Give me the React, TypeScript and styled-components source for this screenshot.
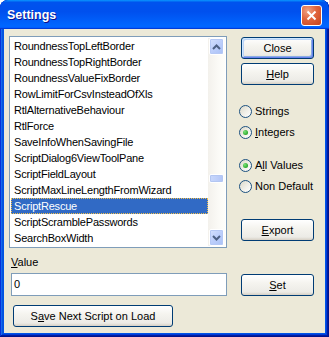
import React from "react";
import styled, { createGlobalStyle } from "styled-components";

const Global = createGlobalStyle`
  html, body { margin: 0; padding: 0; background: #ffffff; }
  body { font-family: "Liberation Sans", Arial, sans-serif; font-size: 11px; font-weight: 400; color: #000; }
  * { box-sizing: border-box; }
`;

const Window = styled.div`
  width: 329px;
  height: 337px;
  display: flex;
  flex-direction: column;
  border-radius: 8px 8px 0 0;
  overflow: hidden;
  background: #0055e5;
  box-shadow: inset -1px -1px #00138c, inset 1px 1px #0831d9, inset -2px -2px #001ea0,
    inset 2px 2px #166aee, inset -3px -3px #003bda, inset 3px 3px #0855dd;
`;

const TitleBar = styled.div`
  height: 29px;
  flex: none;
  display: flex;
  align-items: center;
  justify-content: space-between;
  padding: 0 7px 0 7px;
  background: linear-gradient(180deg, #0997ff, #0053ee 8%, #0050ee 40%, #0066ff 88%, #0066ff 93%, #005bff 95%, #003dd7 96%, #003dd7);
  border-radius: 8px 8px 0 0;
`;

const Title = styled.span`
  font-family: "Liberation Sans", Arial, sans-serif;
  font-weight: bold;
  font-size: 12.5px;
  color: #ffffff;
  text-shadow: 1px 1px #0f1089;
  margin-top: 1px;
`;

const CloseBox = styled.div`
  width: 21px;
  height: 21px;
  margin-top: 1px;
  border: 1px solid #ffffff;
  border-radius: 3px;
  background: radial-gradient(circle at 30% 25%, #f0a284 0%, #e0643d 45%, #c8421b 100%);
  display: flex;
  align-items: center;
  justify-content: center;
`;

const Client = styled.div`
  flex: 1;
  margin: 0 4px 4px 4px;
  background: #ece9d8;
  display: flex;
  flex-direction: column;
  padding: 7px 0 0 5px;
`;

const TopSection = styled.div`
  display: flex;
  height: 212px;
  gap: 14px;
`;

const ListBox = styled.div`
  width: 218px;
  height: 212px;
  border: 1px solid #7f9db9;
  background: #ffffff;
  padding: 1px;
  display: flex;
`;

const Items = styled.div`
  flex: 1;
  display: flex;
  flex-direction: column;
`;

const Item = styled.div<{ $selected?: boolean }>`
  height: 16px;
  line-height: 14px;
  padding: 0 0 0 2px;
  border: 1px ${(p) => (p.$selected ? "dotted #f2c04a" : "solid transparent")};
  background: ${(p) => (p.$selected ? "#316ac5" : "transparent")};
  color: ${(p) => (p.$selected ? "#ffffff" : "#000000")};
  white-space: nowrap;
  letter-spacing: -0.2px;
`;

const ScrollBar = styled.div`
  width: 17px;
  display: flex;
  flex-direction: column;
  background: linear-gradient(90deg, #f3f1ec 0%, #fbfaf6 60%, #fefefb 100%);
  padding: 0 1px;
`;

const ArrowButton = styled.div`
  height: 17px;
  flex: none;
  border: 1px solid #ffffff;
  border-radius: 2px;
  background: linear-gradient(135deg, #d4e1fe 0%, #bccefb 50%, #a9c1f6 100%);
  box-shadow: inset 0 0 0 1px #b5c8f5;
  display: flex;
  align-items: center;
  justify-content: center;
`;

const Track = styled.div`
  flex: 1;
  display: flex;
  flex-direction: column;
  padding-top: 119px;
`;

const Thumb = styled.div`
  height: 9px;
  border: 1px solid #ffffff;
  border-radius: 2px;
  background: linear-gradient(90deg, #c9d8fc, #bccdf9 60%, #b0c4f6);
  box-shadow: inset 0 0 0 1px #b3c6f2;
`;

const RightColumn = styled.div`
  width: 73px;
  display: flex;
  flex-direction: column;
  padding-top: 1px;
`;

const Button = styled.div<{ $default?: boolean; $width?: number; $gap?: number }>`
  width: ${(p) => p.$width ?? 73}px;
  height: 22px;
  flex: none;
  margin-top: ${(p) => p.$gap ?? 0}px;
  padding-top: 3px;
  border: 1px solid #003c74;
  border-radius: 3px;
  background: linear-gradient(180deg, #ffffff 0%, #f5f4ef 40%, #ecebe6 85%, #d6d0c5 100%);
  box-shadow: ${(p) =>
    p.$default
      ? "inset 1px 1px #cee7ff, inset -1px -1px #6982ee, inset 2px 2px #bcd4f6, inset -2px -2px #89ade4"
      : "none"};
  text-align: center;
  line-height: 14px;
  white-space: nowrap;
  font-size: 11px;
  font-weight: 400;
`;

const U = styled.span`
  text-decoration: underline;
  text-underline-offset: 1px;
`;

const RadioRow = styled.div<{ $gap: number }>`
  height: 14px;
  margin-top: ${(p) => p.$gap}px;
  display: flex;
  align-items: center;
  gap: 3px;
  margin-left: -2px;
  white-space: nowrap;
  line-height: 14px;
`;

const RadioCircle = styled.div<{ $checked?: boolean }>`
  width: 13px;
  height: 13px;
  border-radius: 50%;
  border: 1px solid #1c5180;
  background: linear-gradient(135deg, #dcd9c9 0%, #f3f2ec 60%, #ffffff 100%);
  display: flex;
  align-items: center;
  justify-content: center;
  &::after {
    content: "";
    display: ${(p) => (p.$checked ? "block" : "none")};
    width: 5px;
    height: 5px;
    border-radius: 50%;
    background: radial-gradient(circle at 35% 35%, #7be37a, #21a121 80%);
  }
`;

const ValueLabel = styled.div`
  height: 14px;
  margin-top: 7px;
  padding-left: 2px;
  line-height: 14px;
`;

const ValueRow = styled.div`
  display: flex;
  margin-top: 4px;
  gap: 14px;
`;

const TextBox = styled.div`
  width: 216px;
  height: 23px;
  margin-left: 2px;
  border: 1px solid #7f9db9;
  background: #ffffff;
  padding: 0 0 0 2px;
  line-height: 21px;
`;

const BottomRow = styled.div`
  display: flex;
  margin-top: 9px;
  padding-left: 4px;
`;

const items = [
  "RoundnessTopLeftBorder",
  "RoundnessTopRightBorder",
  "RoundnessValueFixBorder",
  "RowLimitForCsvInsteadOfXls",
  "RtlAlternativeBehaviour",
  "RtlForce",
  "SaveInfoWhenSavingFile",
  "ScriptDialog6ViewToolPane",
  "ScriptFieldLayout",
  "ScriptMaxLineLengthFromWizard",
  "ScriptRescue",
  "ScriptScramblePasswords",
  "SearchBoxWidth",
];

const Chevron = ({ up }: { up?: boolean }) => (
  <svg width="9" height="6" viewBox="0 0 9 6">
    <path
      d={up ? "M1 5 L4.5 1.5 L8 5" : "M1 1 L4.5 4.5 L8 1"}
      fill="none"
      stroke="#4d6185"
      strokeWidth="2"
    />
  </svg>
);

export default function App() {
  return (
    <>
      <Global />
      <Window>
        <TitleBar>
          <Title>Settings</Title>
          <CloseBox>
            <svg width="11" height="11" viewBox="0 0 11 11">
              <path d="M1.5 1.5 L9.5 9.5 M9.5 1.5 L1.5 9.5" stroke="#ffffff" strokeWidth="2" />
            </svg>
          </CloseBox>
        </TitleBar>
        <Client>
          <TopSection>
            <ListBox>
              <Items>
                {items.map((it) => (
                  <Item key={it} $selected={it === "ScriptRescue"}>
                    {it}
                  </Item>
                ))}
              </Items>
              <ScrollBar>
                <ArrowButton>
                  <Chevron up />
                </ArrowButton>
                <Track>
                  <Thumb />
                </Track>
                <ArrowButton>
                  <Chevron />
                </ArrowButton>
              </ScrollBar>
            </ListBox>
            <RightColumn>
              <Button $default>Close</Button>
              <Button $gap={4}>
                <U>H</U>elp
              </Button>
              <RadioRow $gap={19}>
                <RadioCircle />
                <span>Strings</span>
              </RadioRow>
              <RadioRow $gap={7}>
                <RadioCircle $checked />
                <span>
                  <U>I</U>ntegers
                </span>
              </RadioRow>
              <RadioRow $gap={19}>
                <RadioCircle $checked />
                <span>
                  A<U>l</U>l Values
                </span>
              </RadioRow>
              <RadioRow $gap={7}>
                <RadioCircle />
                <span>Non Default</span>
              </RadioRow>
              <Button $gap={26}>
                <U>E</U>xport
              </Button>
            </RightColumn>
          </TopSection>
          <ValueLabel>
            <U>V</U>alue
          </ValueLabel>
          <ValueRow>
            <TextBox>0</TextBox>
            <Button $gap={1}>
              <U>S</U>et
            </Button>
          </ValueRow>
          <BottomRow>
            <Button $width={160}>
              S<U>a</U>ve Next Script on Load
            </Button>
          </BottomRow>
        </Client>
      </Window>
    </>
  );
}
